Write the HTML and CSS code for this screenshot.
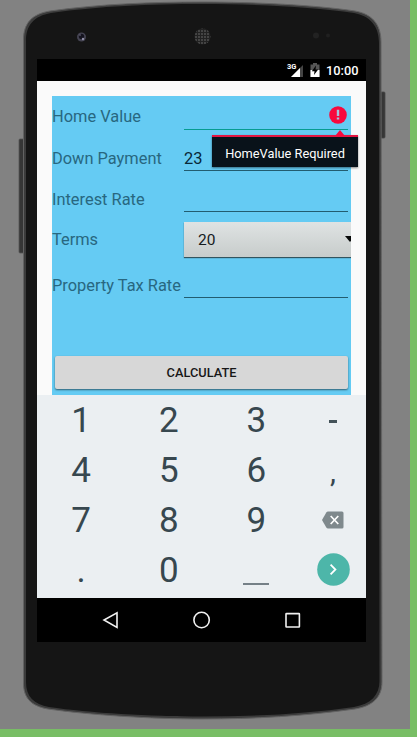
FILE: index.html
```html
<!DOCTYPE html>
<html lang="en">
<head>
<meta charset="utf-8">
<title>Mortgage Calculator</title>
<link rel="stylesheet" href="styles.css">
</head>
<body>
<div class="stage">
  <svg class="shell" width="417" height="737" viewBox="0 0 417 737" aria-hidden="true">
    <defs>
      <pattern id="mesh" width="3" height="3" patternUnits="userSpaceOnUse"><rect width="3" height="3" fill="#222"/><circle cx="1" cy="1" r=".8" fill="#707070"/></pattern>
    </defs>
    <rect x="19" y="139" width="6" height="114" rx="1" fill="#363636" stroke="#555" stroke-width=".8"/>
    <rect x="379" y="92" width="6" height="46" rx="1" fill="#363636" stroke="#484848" stroke-width=".8"/>
    <path d="M23.500 40C23.500 23 32 14 50 11C100 4 150 2 202 2C255 2 315 5 355 11C372 14 381 24 381 42L382 682C382 697 373 706 355 709C305 716 255 719 202 719C150 719 90 715 48 709C31 706 23.500 698 23.500 683Z" fill="#3b3b3b" stroke="#636363"/>
    <path d="M26 41C26 25 34 16 51 13C100 6 150 4 202 4C255 4 313 7 354 13C370 16 379 26 379 43L379.500 681C379.500 695 371 704 354 707C305 714 255 716.500 202 716.500C150 716.500 90 713 49 707C34 704 26 697 26 682Z" fill="#151515"/>
    <circle cx="81.500" cy="37" r="4.500" fill="#454452"/><circle cx="81.500" cy="36.500" r="2.700" fill="#15141f"/><circle cx="83" cy="39" r="1.200" fill="#9290a8"/><circle cx="80" cy="35" r=".8" fill="#77758c"/>
    <circle cx="202.500" cy="36.500" r="8" fill="url(#mesh)"/>
    <circle cx="316" cy="35.500" r="3" fill="#222"/><circle cx="328" cy="35.500" r="2" fill="#202020"/>
  </svg>
  <main class="screen">
    <header class="status">
      <svg class="signal" width="18" height="15" viewBox="0 0 18 15" aria-hidden="true"><path d="M17 1V13H5Z" fill="#444"/><path d="M14 4V13H5Z" fill="#fff"/></svg>
      <span class="network">3G</span>
      <svg class="battery" width="10" height="14" viewBox="0 0 10 14" aria-hidden="true"><path d="M3 0H7V1.500H9.500V14H.5V1.500H3Z" fill="#555"/><path d="M.5 7H9.500V14H.5Z" fill="#fff"/><path d="M6 2.500L1.800 8.200H4.500L4 12L8.200 6.500H5.500Z" fill="#000"/></svg>
      <time>10:00</time>
    </header>
    <section class="app">
      <form class="form">
        <div class="row"><label>Home Value</label><div class="field focus">
          <svg class="alert" width="18" height="18" viewBox="0 0 18 18" aria-hidden="true"><circle cx="9" cy="9" r="8.800" fill="#f8093d"/><path d="M7.800 3.800H10.200V10H7.800ZM7.800 11.400H10.200V13.600H7.800Z" fill="#9fc5df"/></svg>
          <div class="error">HomeValue Required</div></div></div>
        <div class="row"><label>Down Payment</label><div class="field">23</div></div>
        <div class="row"><label>Interest Rate</label><div class="field"></div></div>
        <div class="row terms"><label>Terms</label><div class="select"><span>20</span><svg width="6" height="6" viewBox="0 0 6 6" aria-hidden="true"><path d="M0 0H10L5 6Z" fill="#070909"/></svg></div></div>
        <div class="row tax"><label>Property Tax Rate</label><div class="field"></div></div>
        <button class="calculate" type="button">CALCULATE</button>
      </form>
    </section>
    <section class="keyboard">
      <span>1</span><span>2</span><span>3</span><span class="minus"><i></i></span>
      <span>4</span><span>5</span><span>6</span><span class="comma">,</span>
      <span>7</span><span>8</span><span>9</span><span class="icon"><svg width="22" height="18" viewBox="0 0 22 18" aria-hidden="true"><path d="M6 .5H20Q21.500 .5 21.500 2V16Q21.500 17.500 20 17.500H6Q5 17.500 4.300 16.500L0 9L4.300 1.500Q5 .5 6 .5Z" fill="#7f898d"/><path d="M8.700 5L16.300 13M16.300 5L8.700 13" stroke="#fff" stroke-width="1.700"/></svg></span>
      <span>.</span><span>0</span><span class="space"><i></i></span><span class="icon"><svg width="33" height="33" viewBox="0 0 33 33" aria-hidden="true"><circle cx="16.500" cy="16.500" r="16.300" fill="#4db6a9"/><path d="M13.600 11.700L18.400 16.500L13.600 21.300" fill="none" stroke="#fff" stroke-width="1.800"/></svg></span>
    </section>
    <nav class="nav">
      <svg width="18" height="18" viewBox="0 0 18 18" aria-hidden="true"><path d="M15 1.800V16.400L2 9Z"/></svg>
      <svg width="18" height="18" viewBox="0 0 18 18" aria-hidden="true"><circle cx="8.600" cy="9" r="7.700"/></svg>
      <svg width="18" height="18" viewBox="0 0 18 18" aria-hidden="true"><rect x="2" y="2.600" width="13.400" height="13.400" rx=".5"/></svg>
    </nav>
  </main>
</div>
</body>
</html>
```
FILE: styles.css
```css
* { box-sizing: border-box; }
body { margin: 0; font-family: Roboto, sans-serif; }
.stage {
  position: relative;
  width: 417px;
  height: 737px;
  padding: 59px 0 0 37px;
  overflow: hidden;
  background: #828282;
  border-right: 7px solid #78be65;
  border-bottom: 8px solid #78be65;
}
.shell { position: absolute; left: 0; top: 0; }
.screen { position: relative; width: 329px; height: 583px; display: flex; flex-direction: column; background: #000; }
.status { height: 22px; flex: none; display: flex; align-items: center; justify-content: flex-end; padding-right: 7px; color: #fff; position: relative; }
.status time { font-size: 12.800px; font-weight: 500; line-height: 22px; width: 33px; white-space: nowrap; padding-top: 1px; }
.network { position: absolute; left: 250px; top: 3px; font-size: 7.5px; line-height: 9px; font-weight: 700; }
.signal { margin-right: 6px; margin-top: 2px; }
.battery { margin-right: 6px; }
.app { height: 313.500px; flex: none; background: #fafafa; padding: 14.500px 15px 0; }
.form { width: 299px; height: 299.500px; position: relative; z-index: 1; background: #65cbf3; display: flex; flex-direction: column; }
.row { display: grid; grid-template-columns: 132px 164px; height: 41.400px; flex: none; align-items: center; }
.row label { color: #286780; font-size: 16.400px; line-height: 20px; white-space: nowrap; padding-top: 2px; }
.field { position: relative; height: 34px; align-self: start; border-bottom: 1px solid #225d70; color: #082838; font-size: 16.400px; line-height: 20px; padding-top: 12px; }
.focus { border-bottom-color: #069c91; }
.alert { position: absolute; right: 1px; top: 10.500px; }
.error { position: absolute; z-index: 2; left: 28px; top: 39.500px; width: 146px; height: 32px; background: #09121a; border-top: 2px solid #e41643; color: #fff; font-size: 12.800px; line-height: 34px; text-align: center; white-space: nowrap; box-shadow: 0 1px 2px #0007; }
.error::before { content: ""; position: absolute; right: 13px; bottom: calc(100% + 1px); border: 5px solid transparent; border-top: 0; border-bottom: 6px solid #f8093d; }
.terms { height: 42px; grid-template-columns: 132px 167px; }
.terms label { margin-top: -3px; }
.select { height: 35px; align-self: start; margin-top: 2px; padding-left: 14px; display: flex; align-items: center; justify-content: space-between; font-size: 15.500px; color: #151b1d; background: linear-gradient(#dfe3e3, #c7cccb); box-shadow: 0 1px 1px #31545f; clip-path: inset(-2px 0 -3px -2px); }
.select span { padding-top: 1px; }
.tax { height: 47px; }
.tax label { padding-top: 1px; }
.tax .field { height: 36px; }
.calculate { height: 33px; margin: auto 3px 6px; padding: 0; border: 0; border-radius: 2px; background: #d7d7d7; box-shadow: 0 1px 2px #0008; color: #171717; font: 500 12.800px/34px Roboto, sans-serif; }
.keyboard { height: 203.500px; flex: none; background: #ebeff2; display: grid; grid-template-columns: 88px 87.500px 87.500px 66px; grid-template-rows: repeat(4, 50px); color: #37474f; font-size: 35px; line-height: 50px; }
.keyboard span { display: flex; align-items: center; justify-content: center; padding-top: 2px; }
.keyboard .comma { font-size: 30px; padding-top: 4px; }
.keyboard .icon { padding-top: 0; }
.minus i { width: 8px; height: 2.500px; background: #435259; margin-top: 2px; }
.space i { width: 26px; height: 2px; background: #758087; margin-top: 27px; }
.nav { height: 44px; flex: none; display: grid; grid-template-columns: repeat(3, 91px); justify-content: center; align-items: center; justify-items: center; }
.nav svg { fill: none; stroke: #f1f1f1; stroke-width: 1.600; }
```
